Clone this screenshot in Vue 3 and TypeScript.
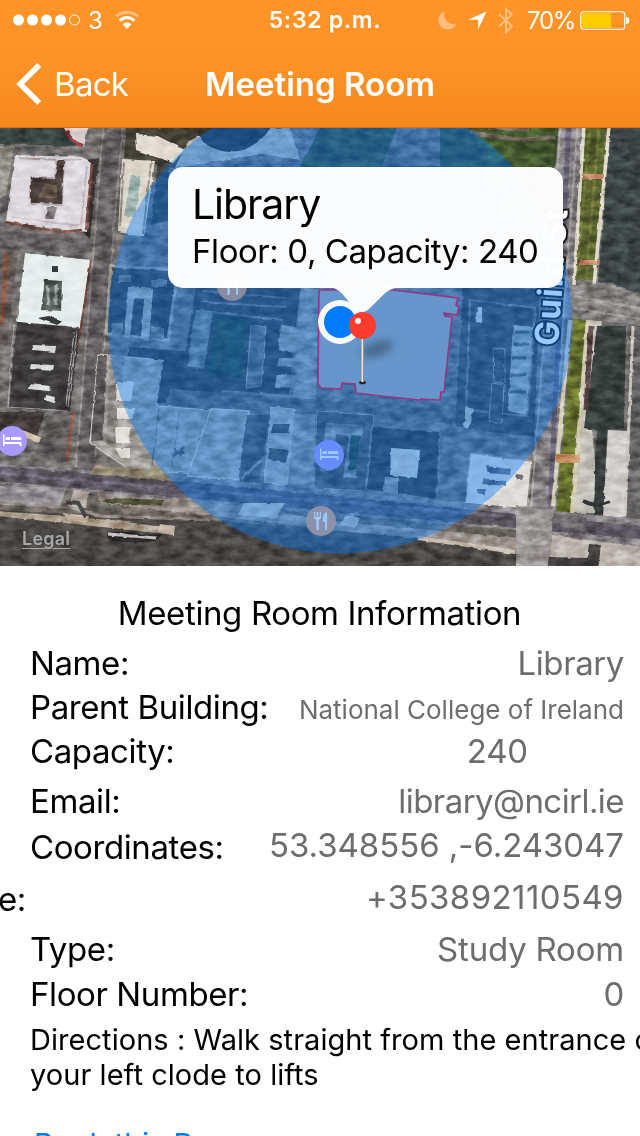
<script setup lang="ts">
interface DetailRow {
  key: string
  label: string
  value: string
}

const rows: DetailRow[] = [
  { key: 'name', label: 'Name:', value: 'Library' },
  { key: 'building', label: 'Parent Building:', value: 'National College of Ireland' },
  { key: 'capacity', label: 'Capacity:', value: '240' },
  { key: 'email', label: 'Email:', value: 'library@ncirl.ie' },
  { key: 'coords', label: 'Coordinates:', value: '53.348556 ,-6.243047' },
  { key: 'phone', label: 'e:', value: '+353892110549' },
  { key: 'type', label: 'Type:', value: 'Study Room' },
  { key: 'floor', label: 'Floor Number:', value: '0' },
]
</script>

<template>
  <div class="screen">
    <header class="top">
      <div class="status">
        <div class="status-left">
          <svg class="signal" width="68" height="12" viewBox="0 0 68 12">
            <g fill="#fff">
              <circle v-for="n in 4" :key="n" :cx="n * 14 - 8.5" cy="6" r="5.5" />
            </g>
            <circle cx="61.5" cy="6" r="5" fill="none" stroke="#fff" stroke-width="1" />
          </svg>
          <span class="carrier">3</span>
          <svg class="wifi" width="24" height="19" viewBox="0 0 24 19">
            <path d="M1.2 5.2Q12-3 22.8 5.2" fill="none" stroke="#fff" stroke-opacity=".4" stroke-width="3" />
            <path d="M4.6 9.6Q12 3.2 19.4 9.6" fill="none" stroke="#fff" stroke-width="3" />
            <path d="M7.6 13.2Q12 9.4 16.4 13.2L12 18Z" fill="#fff" />
          </svg>
        </div>
        <div class="time">5:32 p.m.</div>
        <div class="status-right">
          <svg width="19" height="19" viewBox="0 0 19 19">
            <path d="M6.8.4A9.3 9.3 0 1 0 18.3 12.6 9.2 9.2 0 0 1 6.8.4Z" fill="#fff" fill-opacity=".4" />
          </svg>
          <svg class="arrow" width="19" height="19" viewBox="0 0 19 19">
            <path d="M18.5.5 10.2 18.5V8.7H.3Z" fill="#fff" />
          </svg>
          <svg class="bluetooth" width="16" height="27" viewBox="0 0 16 27">
            <path d="M1 7 14 19.3 8 25V2L14 7.3 1 19.5" fill="none" stroke="#fff" stroke-opacity=".42" stroke-width="2" />
          </svg>
          <span class="percent">70%</span>
          <svg class="battery" width="50" height="19" viewBox="0 0 50 19">
            <rect x=".75" y=".75" width="44" height="17.5" rx="2.8" fill="none" stroke="#fff" stroke-width="1.2" />
            <rect x="2" y="2" width="29.3" height="15" rx="1.2" fill="#fc0" />
            <path d="M46.2 6Q49.3 6.2 49.3 9.5T46.2 13Z" fill="#fff" />
          </svg>
        </div>
      </div>
      <nav class="nav">
        <div class="back">
          <svg width="27" height="42" viewBox="0 0 27 42">
            <path d="M23.3 2 4.2 21 23.3 40" fill="none" stroke="#fff" stroke-width="5.5" />
          </svg>
          <span>Back</span>
        </div>
        <h1>Meeting Room</h1>
      </nav>
    </header>

    <section class="map">
      <svg class="imagery" width="640" height="438" viewBox="0 128 640 438">
        <defs>
          <filter id="grain" x="0" y="0" width="100%" height="100%" color-interpolation-filters="sRGB">
            <feTurbulence type="fractalNoise" baseFrequency=".07 .13" numOctaves="4" seed="8" />
            <feColorMatrix values="1.8 0 0 0 -.37  1.8 0 0 0 -.37  1.8 0 0 0 -.37  0 0 0 0 1" />
          </filter>
          <filter id="soft" x="-50%" y="-50%" width="200%" height="200%"><feGaussianBlur stdDeviation="4" /></filter>
          <filter id="rough" x="0" y="0" width="100%" height="100%" color-interpolation-filters="sRGB">
            <feTurbulence type="fractalNoise" baseFrequency=".12" numOctaves="2" seed="3" result="n" />
            <feDisplacementMap in="SourceGraphic" in2="n" scale="3" xChannelSelector="R" yChannelSelector="G" />
            <feGaussianBlur stdDeviation=".6" />
          </filter>
        </defs>

        <g filter="url(#rough)">
          <path d="M-5 120H650V575H-5Z" fill="#6f6c6b" />
          <!-- north west blocks -->
          <path d="M-5 120H68L82 146 0 144Z" fill="#384340" />
          <path d="M64 128Q68 140 84 147L88 128Z" fill="#d8cdcb" />
          <path d="M66 131Q70 141 83 146" stroke="#8e3c45" stroke-width="4" fill="none" />
          <path d="M-5 146 14 146 6 195-5 200Z" fill="#96938c" />
          <path d="M86 160 99 158 90 238 84 234Z" fill="#3c3536" />
          <path d="M15 155 82 157 91 163 87 232 6 222Z" fill="#dcd7dc" />
          <path d="M18 158 56 160 55 178 31 178 31 204 62 205 64 160 82 159" fill="none" stroke="#b7adb2" stroke-width="2" />
          <path d="M31 178 55 179 57 160 64 160 62 204 31 203Z" fill="#493e3a" />
          <path d="M45 184H57V198H38Z" fill="#66574b" />
          <path d="M12 217 81 226 87 165" fill="none" stroke="#c2b8bd" stroke-width="2" />
          <path d="M5 222 62 232 82 230M92 164 86 230" fill="none" stroke="#7f4e42" stroke-width="2.5" />
          <path d="M47 207H57L54 219H45Z" fill="#8b8285" />
          <path d="M-5 230 95 239 310 252V260L-5 248Z" fill="#656163" />
          <path d="M-5 252H18L7 345H-5Z" fill="#635c59" />
          <path d="M7 254 2 322" stroke="#7f4c3a" stroke-width="4" />
          <path d="M25 253 91 260 80 327 17 322Z" fill="#e5ecec" />
          <path d="M45 280 62 281 61 311 41 310Z" fill="#4d5654" />
          <path d="M48 285V306M56 285V306" stroke="#949b9a" stroke-width="3" />
          <path d="M51 266H58V272H51ZM37 318 49 316 63 321 57 325Z" fill="#383b3d" />
          <path d="M91 260 78 347" stroke="#70473f" stroke-width="2" />
          <path d="M17 322 80 328 70 410 9 408Z" fill="#3f3c3e" />
          <path d="M33 345 56 346 55 352 32 350ZM31 364 54 365 53 371 30 369ZM29 384 51 386 50 391 28 389ZM45 395 55 397 54 403 44 400Z" fill="#d8dad9" />
          <path d="M77 331 68 407M74 332 66 406M14 325 8 407 68 411" fill="none" stroke="#a29d9c" stroke-width="1.2" />
          <path d="M-5 412 45 412 37 437-5 432Z" fill="#413b39" />
          <path d="M23 430 42 438 40 443 20 436Z" fill="#ccb9a1" />
          <path d="M49 416 72 413 66 463 35 454Z" fill="#605c5c" />
          <path d="M73 413 67 462" stroke="#955248" stroke-width="2.5" />

          <!-- street running south -->
          <path d="M103 120H124L96 470H75Z" fill="#625e5f" />
          <path d="M104 120 76 468M123 120 95 460" stroke="#85807d" stroke-width="2" />
          <path d="M126 128 215 128 175 168 124 158Z" fill="#413e34" />
          <path d="M135 134 158 136 185 150 173 163 136 150Z" fill="#e0dbd0" />
          <path d="M187 142 215 128 290 128 300 160 262 154 175 168Z" fill="#b4b3ac" />
          <path d="M193 127H272Q242 166 205 144Z" fill="#302f2b" />
          <path d="M122 159 155 161 144 237 118 232Z" fill="#dcd6ca" />
          <path d="M131 175 141 176 135 217 124 216Z" fill="#9bb0ad" />
          <path d="M124 162 120 226M151 163 143 234" stroke="#989187" stroke-width="2" />
          <path d="M158 160 169 161V220L151 225Z" fill="#3d3f3e" />
          <path d="M111 266 178 270 168 340 106 334Z" fill="#3f3e3a" stroke="#9b968f" stroke-width="3" />
          <path d="M128 287 153 289 149 342 141 338 144 299 134 298 130 338 124 337Z" fill="#a6a49e" />
          <path d="M119 275H131V282H118ZM152 280H167V287H151ZM112 323H123V337H110ZM151 327H164V339H150Z" fill="#77756f" />
          <path d="M98 355 167 360 157 406 222 411 201 474 130 470 90 443Z" fill="#9d9a95" stroke="#cbc5be" stroke-width="1.2" />
          <path d="M98 356 107 356 103 440 91 442Z" fill="#5b5658" />
          <path d="M110 356H125L115 448 106 444Z" fill="#86827e" />
          <path d="M128 347 224 354 220 405 157 403 164 360 128 356Z" fill="#3b3936" />
          <path d="M117 382H134L131 401H116ZM117 408H134L132 419H117ZM115 427H130L129 443H116ZM115 448H130V458H121Z" fill="#e0ded8" />
          <path d="M193 345H211L207 382 189 379Z" fill="#8f8d89" stroke="#c0bbb4" stroke-width="1" />
          <path d="M159 408 152 466M179 412 172 468M199 438H216L213 474 198 473Z" fill="#c5c1ba" stroke="#777370" stroke-width="1.5" />
          <path d="M174 448 182 456M184 447 173 457M175 452H185" stroke="#5c5856" stroke-width="2" />

          <!-- central blocks -->
          <path d="M196 286 300 289 289 395 180 387Z" fill="#413f3c" />
          <path d="M203 291 285 298M201 302 286 307M199 311 283 320" stroke="#6d6b67" stroke-width="2" />
          <path d="M216 317 247 319 242 378 207 375Z" fill="#2e4334" />
          <path d="M219 321 230 322 227 371 213 369Z" fill="#364530" />
          <path d="M195 310 213 311 204 369 187 366Z" fill="#737775" />
          <path d="M251 325 266 326 261 386 246 388Z" fill="#63615d" stroke="#96958f" stroke-width="1" />
          <path d="M281 325 301 328 296 353 278 350ZM279 358H298L295 367 277 366ZM277 374 297 375 295 388 275 387Z" fill="#96948f" />
          <path d="M301 288 319 290 313 500 285 498Z" fill="#908d8a" />
          <path d="M170 389 650 423V436L165 405Z" fill="#5f5d5c" />
          <path d="M211 409 249 411 239 480 187 476Z" fill="#9f9c97" stroke="#c9c3bb" stroke-width="1.5" />
          <path d="M247 415H269L259 483H238Z" fill="#52504c" />
          <path d="M241 479 268 454" stroke="#898783" stroke-width="3" />
          <path d="M271 407 294 409 287 486 264 482Z" fill="#a8a6a1" stroke="#c0bbb3" stroke-width="1" />
          <path d="M273 424H290L288 433H271ZM270 448 289 450 286 462 268 459Z" fill="#444540" />
          <path d="M317 411 374 415 365 491 314 488Z" fill="#504e4a" stroke="#908d88" stroke-width="1" />
          <path d="M326 423 363 425 356 478 343 477 349 435 336 434 333 472 320 470Z" fill="#85837e" />
          <path d="M351 435 361 436 357 470 348 470Z" fill="#36483b" />
          <path d="M372 426 440 431 437 500 366 490Z" fill="#3d3c39" stroke="#7a7873" stroke-width="2" />
          <path d="M391 448 420 450 417 478 390 475Z" fill="#d2cec6" />
          <path d="M385 477H398V493H383Z" fill="#86837e" />

          <!-- eastern blocks -->
          <path d="M320 128H452L580 128 555 168H300Z" fill="#3c4a31" />
          <path d="M397 128H440V166H382Z" fill="#696764" />
          <path d="M471 128H557L548 220H512Z" fill="#43572e" />
          <path d="M470 132 519 140 555 137M488 127 530 130" fill="none" stroke="#75695d" stroke-width="4" />
          <path d="M463 286 540 289 534 438 455 427Z" fill="#454340" />
          <path d="M470 300 535 308 528 416 466 410Z" fill="#474542" stroke="#74726d" stroke-width="2" />
          <path d="M477 307 482 307V323L476 322Z" fill="#cbc8bf" />
          <path d="M513 325 533 327 527 415 508 411Z" fill="#a0a19d" />
          <path d="M514 332H529M513 344H529M512 358H526M511 375H526M510 392H526" stroke="#5b5b57" stroke-width="3" />
          <path d="M492 383 504 385 502 423 489 421ZM493 348 505 349V383L494 382Z" fill="#484643" stroke="#908e89" stroke-width="1" />
          <path d="M466 407 474 409 468 429 464 426Z" fill="#bab7af" />
          <path d="M470 453 532 461 527 511 465 504Z" fill="#dedbd7" stroke="#8c8983" stroke-width="1.5" />
          <path d="M486 466 511 469 510 475 488 473ZM484 479 506 481V486L482 484ZM516 474 523 475 521 480 515 479ZM478 489H485V494H477Z" fill="#686970" />
          <path d="M559 120H585L552 575H525Z" fill="#7f7b7d" />
          <path d="M561 120 527 560M578 120 552 475" stroke="#a29c99" stroke-width="2" />
          <path d="M569 120 550 510" stroke="#605c70" stroke-width="5" />
          <path d="M585 120H607L596 280H573Z" fill="#56612d" />
          <path d="M590 128 577 270M599 128 586 280" stroke="#6b7138" stroke-width="3" />
          <path d="M584 125 574 285M609 128 594 286" stroke="#ded8c8" stroke-width="3.5" />
          <path d="M583 174H604V179H582ZM580 260H600V265H580Z" fill="#bd8063" />
          <path d="M611 125H650V296L598 282Z" fill="#3b4445" />
          <path d="M574 318H590L578 512H556Z" fill="#626e2c" />
          <path d="M587 318 602 321 592 430 600 514 571 512Z" fill="#c3bfb8" />
          <path d="M570 320 553 506M588 319 572 512" stroke="#d1cbb1" stroke-width="4" />
          <path d="M597 326 626 326 624 428 607 430 603 520 594 518 596 430 584 428Z" fill="#363e3b" />
          <path d="M591 326 586 410" stroke="#564345" stroke-width="5" />
          <path d="M608 430 629 431 627 516 603 519Z" fill="#cfcbc9" />
          <path d="M629 325 650 326V520H626Z" fill="#656363" />
          <path d="M633 326 625 515" stroke="#c8c4be" stroke-width="3" />
          <path d="M569 286 610 282 650 302V326L569 318Z" fill="#827f7f" />
          <path d="M574 296 640 308M574 308 640 319" stroke="#9f9a98" stroke-width="2" />
          <path d="M556 454H580V463H556Z" fill="#c68f62" />
          <path d="M583 501Q597 508 611 502" stroke="#303434" stroke-width="4" fill="none" />

          <!-- quay and river -->
          <path d="M-5 464 180 476 650 520V551L-5 492Z" fill="#807b7e" />
          <path d="M-5 466 170 480 650 527V540L-5 481Z" fill="#57525b" />
          <path d="M-5 473 180 489 530 518" fill="none" stroke="#696272" stroke-width="3" />
          <path d="M95 465 160 469 185 482 90 474Z" fill="#8b836e" />
          <path d="M-5 484 30 488 100 494 180 502 530 531 650 550V570H-5Z" fill="#67635c" />
          <path d="M0 486 66 488 60 509 0 502Z" fill="#949196" />
          <path d="M74 490 88 492 86 508 68 508Z" fill="#aaa29a" />
          <path d="M97 493 270 509 318 520 520 538V551L100 503Z" fill="#989089" />
          <path d="M110 498 165 500 160 506 100 502Z" fill="#4e5038" />
          <path d="M244 503H285L276 518 238 515ZM346 515 360 518 355 528 340 525Z" fill="#c3c0b8" />
          <path d="M-5 510 210 520 420 538 517 554V575H-5Z" fill="#494644" />
          <path d="M-5 503 70 507 100 516 210 520" stroke="#8d857f" stroke-width="3" fill="none" />
          <path d="M-5 511 66 516 120 521 174 529V535L66 523-5 516Z" fill="#a99a88" />
          <path d="M64 513 89 516 87 523 66 520ZM160 524 175 526 174 535 158 532Z" fill="#c2b3a2" />
          <path d="M66 502 78 503 86 517" fill="none" stroke="#3c3d3c" stroke-width="4" />
          <path d="M106 533Q120 530 142 534L162 535 155 541Q125 545 108 539Z" fill="#29272a" />
          <path d="M108 534 156 538M119 534 130 536" stroke="#c1bdb9" stroke-width="3" />
          <path d="M418 538 515 552" stroke="#c7bbad" stroke-width="4" />
          <path d="M516 506 553 510 550 575 516 570Z" fill="#9b9695" />
          <path d="M552 535 650 548V575H548Z" fill="#bab3ac" />
          <path d="M549 557 587 558 589 544 601 545 598 570H547Z" fill="#413e3d" />
          <path d="M553 513 588 516 582 530 552 526Z" fill="#696568" />
        </g>
        <rect class="grain" y="128" width="640" height="438" filter="url(#grain)" />

        <!-- college footprint -->
        <path d="M319 290H393L458 298 456 305 459 307 457 315 444 313 445 316 452 317 444 392 441 392 440 400 421 399 420 400 381 396 356 393 355 384 342 383 341 389 321 388 318 384Z" fill="#aaa8a8" stroke="#ff0830" stroke-width="1.6" />
        <path d="M343 385H354V391L343 389Z" fill="#6a7470" />

        <!-- points of interest -->
        <circle cx="232" cy="286" r="15" fill="#e6955f" />
        <circle cx="12" cy="441" r="15" fill="#a899ff" />
        <circle cx="329" cy="455" r="15" fill="#a899ff" />
        <circle cx="321" cy="521" r="15" fill="#e6a070" />
        <g v-for="p in [[12, 441], [329, 455]]" :key="p[0]" :transform="`translate(${p[0]} ${p[1]})`" fill="#fff">
          <path d="M-9-6.500H-7.500V1H9.500V5H7.500V3H-7.500V5H-9ZM-6.500-1V-2.200Q-6.500-4-5-4H-2V-1ZM-1-1V-4H7.500Q9.500-4 9.500-1Z" />
        </g>
        <g v-for="p in [[232, 286], [321, 521]]" :key="p[0]" :transform="`translate(${p[0]} ${p[1]})`" fill="#fff">
          <path d="M-7-9H-5.800V-4H-4.300V-9H-2.700V-4H-1.200V-9H0V-3.500Q0-1.600-2.200-1V9H-4.600V-1Q-7-1.600-7-3.500ZM6-9V9H4.200V1H2V-3Q2.200-8 6-9Z" />
        </g>
        <text class="street" transform="translate(558 346.500) rotate(-86)" textLength="137">Guild St</text>

        <circle cx="340" cy="321.5" r="232" fill="#007aff" fill-opacity=".4" />

        <circle cx="340" cy="322" r="22" fill="#f8f9fa" />
        <circle cx="340" cy="322" r="16" fill="#007aff" />
        <ellipse cx="377" cy="349" rx="17" ry="7" transform="rotate(-18 377 349)" fill="#304962" fill-opacity=".6" filter="url(#soft)" />
        <path d="M332 287.500H397Q388 289 381 297L371 307Q362 317 353 307L345 297Q339 289 332 287.500Z" fill="#fbfcfd" />
        <ellipse cx="362.5" cy="382.5" rx="3.5" ry="1.8" fill="#1d2930" />
        <path d="M362.500 337V382" stroke="#918c8b" stroke-width="3" />
        <path d="M362.300 337V382" stroke="#e9e3df" stroke-width="1.5" />
        <circle cx="362.5" cy="325.5" r="13.5" fill="#ff3b30" />
        <circle cx="358" cy="321" r="3" fill="#fff0ef" />
      </svg>
      <div class="callout">
        <div class="callout-title">Library</div>
        <div class="callout-sub">Floor: 0, Capacity: 240</div>
      </div>
      <a class="legal">Legal</a>
    </section>

    <section class="details">
      <h2>Meeting Room Information</h2>
      <div v-for="row in rows" :key="row.key" class="row" :class="row.key">
        <span class="label">{{ row.label }}</span>
        <span class="value">{{ row.value }}</span>
      </div>
      <p class="directions">Directions : Walk straight from the entrance o<br />your left clode to lifts</p>
      <a class="book">Book this Room</a>
    </section>
  </div>
</template>

<style>
html,
body {
  margin: 0;
  overflow: hidden;
}
</style>

<style scoped>
.screen {
  width: 640px;
  height: 1136px;
  overflow: hidden;
  background: #fff;
  color: #000;
  font-family: Inter, 'Liberation Sans', sans-serif;
  display: flex;
  flex-direction: column;
}
svg {
  display: block;
  flex: none;
}
.top {
  height: 128px;
  flex: none;
  box-sizing: border-box;
  color: #fff;
  background: linear-gradient(#ff9428, #fd9226 50%, #f6891d);
  border-bottom: 1px solid #d9771a;
}
.status {
  height: 40px;
  display: grid;
  grid-template-columns: 200px 1fr 200px;
  align-items: center;
  font-size: 24px;
}
.status-left,
.status-right {
  display: flex;
  align-items: center;
}
.status-left {
  padding-left: 13px;
}
.carrier {
  width: 15px;
  margin-left: 7px;
  font-size: 24px;
}
.wifi {
  margin-left: 12px;
}
.time {
  text-align: center;
  font-weight: 600;
  font-size: 23px;
  letter-spacing: 0.7px;
  padding-left: 10px;
  white-space: nowrap;
}
.status-right {
  margin-left: -2px;
}
.arrow {
  margin-left: 11px;
}
.bluetooth {
  margin-left: 11px;
}
.percent {
  margin-left: 13px;
  width: 47px;
  letter-spacing: -1.3px;
}
.battery {
  margin-left: 6px;
}
.nav {
  height: 87px;
  display: grid;
  grid-template-columns: 160px 1fr 160px;
  align-items: center;
}
.back {
  display: flex;
  align-items: center;
  padding-left: 16px;
  font-size: 33px;
  letter-spacing: -0.7px;
}
.back span {
  margin-left: 11px;
}
h1,
h2,
p {
  margin: 0;
}
h1 {
  font-size: 33px;
  font-weight: 600;
  text-align: center;
  letter-spacing: 0;
}
.map {
  height: 438px;
  flex: none;
  position: relative;
  overflow: hidden;
}
.grain {
  mix-blend-mode: overlay;
  opacity: 0.34;
}
.street {
  font-size: 33px;
  font-weight: 700;
  fill: #fff;
  stroke: #1b1b1b;
  stroke-width: 4px;
  paint-order: stroke;
}
.callout {
  position: absolute;
  left: 168px;
  top: 39px;
  width: 395px;
  height: 121px;
  box-sizing: border-box;
  padding: 12px 24px;
  border-radius: 15px;
  background: rgba(255, 255, 255, 0.975);
  white-space: nowrap;
}
.callout-title {
  font-size: 41px;
  line-height: 51px;
  letter-spacing: -1.1px;
}
.callout-sub {
  font-size: 33px;
  line-height: 42px;
  letter-spacing: -0.42px;
}
.legal {
  position: absolute;
  left: 22px;
  top: 399px;
  font-size: 18px;
  line-height: 24px;
  font-weight: 600;
  letter-spacing: 0.2px;
  color: #a7a7a7;
  text-decoration: underline;
  text-underline-offset: 3px;
}
.details {
  flex: none;
  padding: 25px 16px 0 30px;
  font-size: 33px;
  line-height: 44px;
  letter-spacing: -0.4px;
  white-space: nowrap;
}
h2 {
  height: 50px;
  font-size: 33px;
  font-weight: 400;
  text-align: center;
  margin-right: 15px;
  letter-spacing: -0.38px;
}
.row {
  display: flex;
  justify-content: space-between;
  align-items: baseline;
  height: 44px;
}
.value {
  color: #6d6d6d;
  letter-spacing: -0.2px;
}
.name .value {
  letter-spacing: -0.4px;
}
.building .value {
  font-size: 26px;
  letter-spacing: 0;
}
.capacity {
  height: 50px;
  padding-right: 96px;
}
.email {
  height: 46px;
}
.email .value {
  letter-spacing: -0.55px;
}
.coords {
  height: 52px;
}
.coords .value,
.phone .value {
  position: relative;
  top: -2px;
}
.coords .value {
  letter-spacing: -0.05px;
}
.phone {
  height: 50px;
  margin-left: -32px;
}
.phone .value {
  letter-spacing: 0.4px;
}
.type {
  height: 45px;
}
.directions {
  font-size: 29px;
  line-height: 35px;
  padding-top: 6px;
  letter-spacing: 0.05px;
}
.book {
  display: block;
  padding: 30px 0 0 4px;
  font-size: 30px;
  letter-spacing: 0;
  color: #007aff;
}
</style>
